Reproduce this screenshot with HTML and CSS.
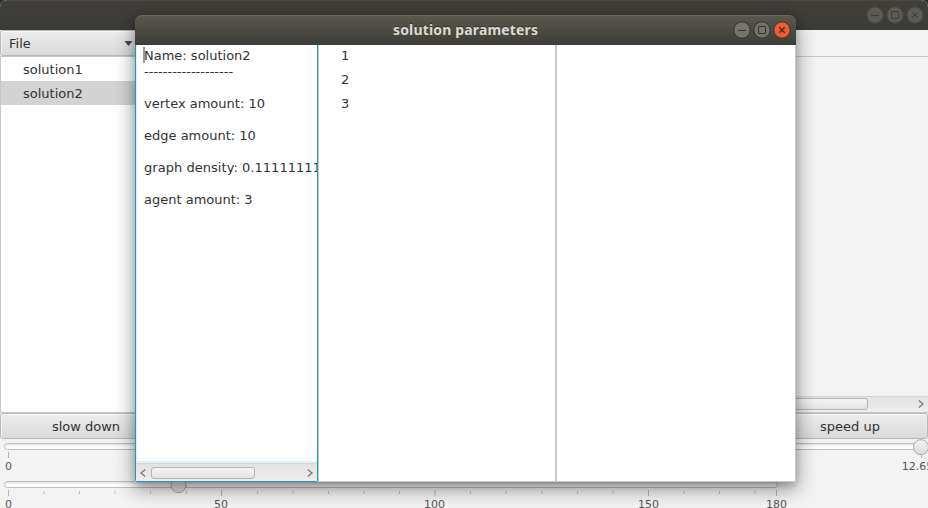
FILE: index.html
```html
<!DOCTYPE html>
<html lang="en">
<head>
<meta charset="utf-8">
<title>solution parameters</title>
<link rel="stylesheet" href="styles.css">
</head>
<body>
<div class="desktop">
  <main class="main-window">
    <header class="titlebar main-title">
      <div class="controls dim">
        <svg class="ctl" viewBox="0 0 18 18"><circle cx="9" cy="9" r="8.2"/><path d="M5 9.5h8"/></svg>
        <svg class="ctl" viewBox="0 0 18 18"><circle cx="9" cy="9" r="8.2"/><path d="M5.5 5.5h7v7h-7z"/></svg>
        <svg class="ctl" viewBox="0 0 18 18"><circle cx="9" cy="9" r="8.2"/><path d="M6.3 6.3l5.4 5.4M11.7 6.3l-5.4 5.4"/></svg>
      </div>
    </header>
    <div class="menu-row">
      <button class="btn file-btn"><span>File</span><svg class="caret" viewBox="0 0 8 5"><path d="M0 0h8L4 5z"/></svg></button>
    </div>
    <div class="workspace">
      <ul class="solutions">
        <li>solution1</li>
        <li class="selected">solution2</li>
      </ul>
      <div class="canvas">
        <div class="scrollbar canvas-bar">
          <span class="scroll-thumb"></span>
          <svg class="arrow" viewBox="0 0 6 8"><path d="M.8.5L5 4 .8 7.5"/></svg>
        </div>
      </div>
    </div>
    <div class="button-row">
      <button class="btn slow">slow down</button>
      <button class="btn speed">speed up</button>
    </div>
    <svg class="sliders" viewBox="0 0 928 69">
      <defs>
        <linearGradient id="track" x1="0" y1="0" x2="0" y2="1"><stop offset="0" stop-color="#dedede"/><stop offset=".5" stop-color="#fafafa"/><stop offset="1" stop-color="#fff"/></linearGradient>
        <linearGradient id="knob" x1="0" y1="0" x2="0" y2="1"><stop offset="0" stop-color="#f5f5f5"/><stop offset="1" stop-color="#dadada"/></linearGradient>
      </defs>
      <g class="track">
        <rect x="4.5" y="4.5" width="921" height="6" rx="3"/>
        <rect x="4.5" y="42.5" width="773" height="6" rx="3"/>
      </g>
      <path class="major" d="M8.500 13v6M921.500 13v6M8.500 51v6M221.500 51v6M435 51v6M648.500 51v6M776.500 51v6"/>
      <path class="minor" d="M44 52v3M79.500 52v3M115 52v3M150.500 52v3M186.500 52v3M257.500 52v3M293 52v3M328.500 52v3M364 52v3M399.500 52v3M470.500 52v3M506 52v3M542 52v3M577.500 52v3M613 52v3M684 52v3M719.500 52v3M755 52v3"/>
      <g class="knob"><circle cx="921" cy="8.200" r="7.500"/><circle cx="178.500" cy="46.200" r="7.500"/></g>
      <g class="labels">
        <text x="8.500" y="31">0</text><text x="917.500" y="31">12.65</text>
        <text x="8.500" y="69">0</text><text x="221" y="69">50</text><text x="434.500" y="69">100</text><text x="648.500" y="69">150</text><text x="776.500" y="69">180</text>
      </g>
    </svg>
  </main>

  <section class="dialog">
    <header class="titlebar dialog-title">
      <h1>solution parameters</h1>
      <div class="controls">
        <svg class="ctl" viewBox="0 0 18 18"><circle cx="9" cy="9" r="8.2"/><path d="M5 9.500h8"/></svg>
        <svg class="ctl" viewBox="0 0 18 18"><circle cx="9" cy="9" r="8.2"/><path d="M5.500 5.500h7v7h-7z"/></svg>
        <svg class="ctl close" viewBox="0 0 18 18"><circle cx="9" cy="9" r="8.2"/><path d="M6.300 6.300l5.400 5.400M11.700 6.300l-5.400 5.400"/></svg>
      </div>
    </header>
    <div class="panes">
      <div class="details">
        <div class="report"><span class="cursor"></span>Name: solution2
-------------------

vertex amount: 10

edge amount: 10

<span class="density">graph density: 0.11111111</span>

agent amount: 3</div>
        <div class="scrollbar report-bar">
          <svg class="arrow" viewBox="0 0 6 8"><path d="M5.200.5L1 4l4.200 3.500"/></svg>
          <span class="scroll-thumb"></span>
          <svg class="arrow" viewBox="0 0 6 8"><path d="M.8.5L5 4 .8 7.500"/></svg>
        </div>
      </div>
      <ul class="agents"><li>1</li><li>2</li><li>3</li></ul>
      <div class="extra"></div>
    </div>
  </section>
</div>
</body>
</html>
```
FILE: styles.css
```css
* { box-sizing: border-box; }
body {
  margin: 0;
  font: 13px/16px "DejaVu Sans", sans-serif;
  color: #323232;
  background: #2c2f33;
}
ul { list-style: none; margin: 0; padding: 0; }
.desktop { position: relative; width: 928px; height: 508px; overflow: hidden; }
.main-window {
  display: flex;
  flex-direction: column;
  height: 508px;
  background: #f3f3f3;
  border-radius: 7px 7px 0 0;
  overflow: hidden;
}
.titlebar { display: flex; align-items: center; height: 30px; flex: none; }
.main-title {
  justify-content: flex-end;
  padding: 0 4px 2px 0;
  background: linear-gradient(#403f3a, #3c3b37);
  border-top: 1px solid #4a4945;
}
.controls { display: flex; gap: 2px; }
.ctl { width: 18px; height: 18px; fill: #74736c; stroke: #33322e; stroke-width: 1; }
.ctl path { fill: none; stroke: #34332f; }
.dim .ctl { fill: #5b5a54; stroke: #474641; }
.dim .ctl path { stroke: #3b3a36; }
.ctl.close { fill: #ec5e32; stroke: #383530; }
.ctl.close path { stroke: #4b2c18; stroke-width: 1.4; }

.menu-row { height: 26px; flex: none; }
.btn {
  height: 26px;
  padding: 2px 0 0;
  font: inherit;
  color: inherit;
  border: 1px solid #b8b8b8;
  border-radius: 3px;
  background: linear-gradient(#ededed, #dadada);
  box-shadow: inset 0 1px #fafafa, inset 1px 0 #f3f3f3;
}
.file-btn {
  display: flex;
  align-items: center;
  justify-content: space-between;
  width: 137px;
  padding: 2px 3px 0 8px;
}
.caret { width: 9px; height: 5px; margin-bottom: 2px; fill: #484848; }
.workspace { display: flex; flex: 1; min-height: 0; }
.solutions { width: 322px; background: #fff; border: 1px solid #c8c8c8; }
.solutions li { height: 24px; padding: 5px 22px 3px; }
.solutions .selected { background: #d3d3d3; }
.canvas {
  flex: 1;
  display: flex;
  align-items: flex-end;
  border: 1px solid #c8c8c8;
  border-right: 0;
}
.scrollbar {
  display: flex;
  align-items: center;
  background: linear-gradient(#e2e2e2, #eee);
  border-top: 1px solid #d6d6d6;
}
.canvas-bar { width: 100%; height: 16px; padding: 0 4px 1px 0; justify-content: space-between; }
.scroll-thumb {
  height: 12px;
  border: 1px solid #b4b4b4;
  border-radius: 3px;
  background: linear-gradient(#f5f5f5, #e2e2e2);
}
.canvas-bar .scroll-thumb { width: 545px; }
.arrow { width: 6px; height: 8px; fill: none; stroke: #777; stroke-width: 1.3; overflow: visible; }
.button-row { display: flex; justify-content: space-between; height: 26px; flex: none; }
.slow { width: 172px; }
.speed { width: 157px; padding-left: 1px; }
.sliders { width: 928px; height: 69px; flex: none; }
.track rect { fill: url(#track); stroke: #bdbdbd; }
.major { stroke: #b4b4b4; }
.minor { stroke: #c0c0c0; }
.knob circle { fill: url(#knob); stroke: #a8a8a8; }
.labels { font-size: 11px; fill: #565656; text-anchor: middle; }

.dialog {
  position: absolute;
  left: 135px;
  top: 15px;
  width: 661px;
  height: 467px;
  border-radius: 7px 7px 0 0;
  box-shadow: 0 6px 20px 1px rgba(0, 0, 0, .4), 0 4px 7px rgba(0, 0, 0, .14);
}
.dialog-title {
  padding: 0 5px 2px 258px;
  justify-content: space-between;
  border-radius: 7px 7px 0 0;
  background: linear-gradient(#5a574e, #3e3d38);
  border-top: 1px solid #69665c;
}
.dialog-title h1 {
  margin: 0;
  font: bold 14px/20px "Noto Sans", sans-serif;
  letter-spacing: .16px;
  color: #dedbd2;
  white-space: nowrap;
  text-shadow: 0 -1px #33322e;
}
.panes { display: flex; height: 437px; background: #fff; }
.details {
  display: flex;
  flex-direction: column;
  justify-content: space-between;
  width: 183px;
  border: 1px solid #159bc4;
  border-top: 0;
  border-radius: 0 0 2px 2px;
}
.report { position: relative; height: 418px; padding: 3px 0 0 7px; white-space: pre; overflow: hidden; border: solid #dff2f8; border-width: 0 0 2px 1px; }
.density { letter-spacing: .04px; }
.cursor { position: absolute; left: 6px; top: 2px; width: 2px; height: 16px; background: #999; }
.report-bar { height: 18px; padding: 0 4px; gap: 5px; }
.report-bar .scroll-thumb { width: 104px; }
.report-bar .arrow:last-child { margin-left: auto; }
.agents { width: 238px; padding-left: 22px; border: solid #c8c8c8; border-width: 0 1px 1px 1px; }
.agents li { height: 24px; padding-top: 3px; }
.extra { flex: 1; border: solid #c8c8c8; border-width: 0 1px 1px 1px; }
```
